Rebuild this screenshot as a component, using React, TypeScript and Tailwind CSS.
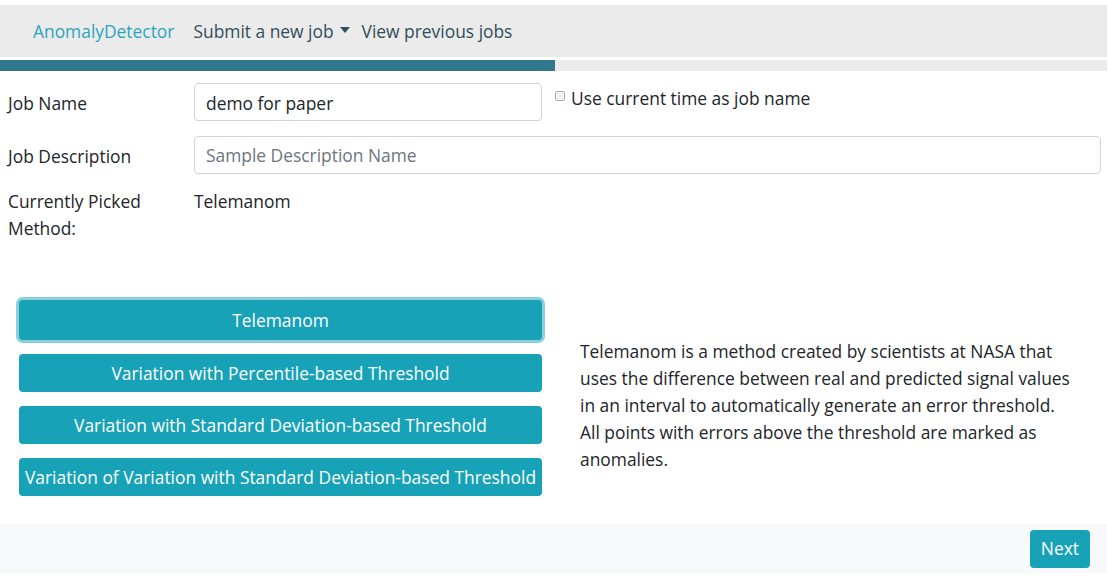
import React from 'react';

const font = { fontFamily: '"Open Sans", "Noto Sans", sans-serif' };

const methods = [
  'Telemanom',
  'Variation with Percentile-based Threshold',
  'Variation with Standard Deviation-based Threshold',
  'Variation of Variation with Standard Deviation-based Threshold',
];

export default function App() {
  return (
    <div className="w-[1107px] bg-white pt-[5px] text-[#212529] text-[17.4px]" style={font}>
      {/* Navbar */}
      <nav className="h-[52px] bg-[#ebebeb] flex items-center pl-[33px] text-[17.4px]">
        <span className="text-[#2aa5bd]">AnomalyDetector</span>
        <span className="ml-[19px] flex items-center gap-[6px] text-[#2f4f5a]">
          Submit a new job
          <svg width="10" height="6" viewBox="0 0 10 6" className="mt-[-2px]">
            <path d="M0 0 L10 0 L5 6 Z" fill="#2f4f5a" />
          </svg>
        </span>
        <span className="ml-[12px] text-[#2f4f5a]">View previous jobs</span>
      </nav>

      {/* Progress */}
      <div className="mt-[3px] h-[11px] bg-[#ebebeb]">
        <div className="h-full w-[555px] bg-[#31788f]" />
      </div>

      {/* Form */}
      <div className="pl-[8px] pr-[6px] pt-[12px]">
        <div className="flex items-center">
          <label className="w-[186px] pt-[3px]">Job Name</label>
          <input
            readOnly
            value="demo for paper"
            className="w-[348px] h-[38px] border border-[#ced4da] rounded-[4px] px-[11px] pt-[2px] text-[#212529] outline-none"
            style={font}
          />
          <label className="flex items-start ml-[13px] self-start mt-[3px]">
            <span className="mt-[5px] w-[10px] h-[10px] border border-[#a8a8a8] rounded-[2px] bg-[#f3f3f3]" />
            <span className="ml-[6px] mt-[-1px]">Use current time as job name</span>
          </label>
        </div>

        <div className="flex items-center mt-[15px]">
          <label className="w-[186px] pt-[2px]">Job Description</label>
          <input
            readOnly
            placeholder="Sample Description Name"
            className="flex-1 h-[38px] border border-[#ced4da] rounded-[4px] px-[11px] text-[#212529] placeholder:text-[#6c757d] outline-none"
            style={font}
          />
        </div>

        <div className="flex mt-[14px] leading-[27px]">
          <div className="w-[186px]">
            Currently Picked
            <br />
            Method:
          </div>
          <div>Telemanom</div>
        </div>
      </div>

      {/* Methods */}
      <div className="flex items-center mt-[58px] pl-[19px]">
        <div className="w-[523px] flex flex-col gap-[14px]">
          {methods.map((m, i) => (
            <button
              key={m}
              className={
                'h-[38px] w-full rounded-[4px] bg-[#17a2b8] text-white text-[17.4px] whitespace-nowrap ' +
                (i === 0 ? 'ring-[3px] ring-[#17a2b8]/50 h-[40px]' : '')
              }
              style={font}
            >
              {m}
            </button>
          ))}
        </div>
        <p className="ml-[38px] mt-[14px] leading-[27px]">
          Telemanom is a method created by scientists at NASA that
          <br />
          uses the difference between real and predicted signal values
          <br />
          in an interval to automatically generate an error threshold.
          <br />
          All points with errors above the threshold are marked as
          <br />
          anomalies.
        </p>
      </div>

      {/* Footer */}
      <div className="mt-[28px] h-[49px] bg-[#f8f9fa] flex items-center justify-end pr-[18px]">
        <button
          className="h-[38px] px-[11px] ml-auto mr-[-1px] rounded-[4px] bg-[#17a2b8] text-white text-[17.4px]"
          style={font}
        >
          Next
        </button>
      </div>
    </div>
  );
}
